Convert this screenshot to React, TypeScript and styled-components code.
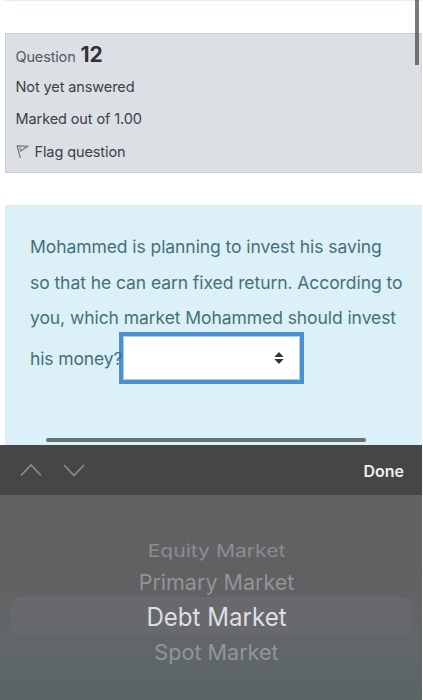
import React from "react";
import styled, { createGlobalStyle } from "styled-components";

const GlobalStyle = createGlobalStyle`
  * {
    box-sizing: border-box;
  }
  body {
    margin: 0;
    background: #fff;
    font-family: Inter, "Liberation Sans", sans-serif;
  }
`;

const Screen = styled.div`
  width: 423px;
  height: 700px;
  display: flex;
  flex-direction: column;
  overflow: hidden;
  padding-right: 1px;
  background: #fff;
`;

const PageView = styled.main`
  position: relative;
  height: 445px;
  flex: none;
  padding-left: 5px;
  overflow: hidden;
`;

const PreviousCard = styled.div`
  height: 1px;
  margin-bottom: 32px;
  background: #e3f0f2;
`;

const InfoCard = styled.section`
  height: 140px;
  padding: 9px 9.5px 0;
  border: 1px solid #cbced6;
  border-right-color: #d6d9e0;
  background: #dcdfe4;
  color: #3c4047;
`;

const InfoLine = styled.div<{ $height: number }>`
  height: ${p => p.$height}px;
  display: flex;
  align-items: center;
  font-size: 14.5px;
  letter-spacing: -0.1px;
  white-space: pre;
`;

const QuestionLabel = styled.h3`
  height: 25px;
  margin: 0;
  display: flex;
  align-items: baseline;
  gap: 5px;
  font-size: 14.5px;
  line-height: 24px;
  font-weight: 400;
  letter-spacing: -0.15px;
  color: #555961;
`;

const QuestionNumber = styled.span`
  font-size: 21px;
  font-weight: 700;
  color: #2f3338;
`;

const FlagIcon = styled.svg`
  width: 13px;
  height: 15px;
  margin-right: 6px;
`;

const QuestionCard = styled.section`
  height: 240px;
  margin-top: 32px;
  padding: 24px 0 0 25px;
  background: #dcf0f8;
  color: #44707b;
`;

const TextLine = styled.div`
  height: 35.7px;
  line-height: 36px;
  font-size: 17.5px;
  letter-spacing: -0.07px;
  white-space: nowrap;
`;

const AnswerLine = styled.div`
  height: 52px;
  margin-top: -4px;
  display: flex;
  align-items: center;
  font-size: 17.5px;
  letter-spacing: -0.12px;
  white-space: nowrap;
`;

const AnswerPrompt = styled.span`
  position: relative;
  z-index: 1;
  width: 89px;
`;

const SelectBox = styled.button`
  width: 185px;
  height: 52px;
  padding: 0 16px 0 0;
  display: flex;
  align-items: center;
  justify-content: flex-end;
  border: 4px solid #4b91d1;
  border-radius: 0;
  box-shadow: inset 0 0 0 1px #a9cdf0;
  background: #fff;
`;

const VerticalScrollbar = styled.div`
  position: absolute;
  top: 0;
  right: 3px;
  width: 4px;
  height: 65px;
  background: rgba(70, 68, 74, 0.72);
`;

const HorizontalScrollbar = styled.div`
  position: absolute;
  left: 46px;
  bottom: 3px;
  width: 320px;
  height: 4px;
  border-radius: 2px;
  background: #63747b;
`;

const Toolbar = styled.div`
  height: 50px;
  flex: none;
  display: flex;
  align-items: center;
  padding: 0 18px 0 20px;
  background: #464646;
`;

const Arrow = styled.svg`
  width: 22px;
  height: 14px;
  margin-right: 21px;
  fill: none;
  stroke: #8b8b8b;
  stroke-width: 1.7;
`;

const DoneButton = styled.button`
  margin-left: auto;
  padding: 2px 0 0;
  border: 0;
  background: none;
  color: #efefef;
  font: 600 16px/20px Inter, sans-serif;
`;

const Picker = styled.div`
  height: 205px;
  padding: 40px 10px 0 11px;
  background: linear-gradient(#616264 0%, #606163 42%, #626466 55%, #616769 73%, #5a6366 100%);
`;

const Option = styled.div<{ $height: number; $color: string; $selected?: boolean }>`
  height: ${p => p.$height}px;
  padding-left: 10px;
  display: flex;
  align-items: center;
  justify-content: center;
  border-radius: 8px;
  background: ${p => (p.$selected ? "#68696c" : "transparent")};
  color: ${p => p.$color};
`;

const OptionText = styled.span<{ $size: number; $squash: number }>`
  padding-top: 2px;
  font-size: ${p => p.$size}px;
  line-height: 1.2;
  transform: scaleY(${p => p.$squash});
`;

const options = [
  { label: "Equity Market", height: 31, color: "#8b8d8f", size: 21.1, squash: 0.82 },
  { label: "Primary Market", height: 31, color: "#929496", size: 21.5, squash: 0.98 },
  { label: "Debt Market", height: 39, color: "#dedfe3", size: 24.1, squash: 1.06, selected: true },
  { label: "Spot Market", height: 32, color: "#8f9799", size: 21.6, squash: 0.98 }
];

const App = () => {
  return (
    <>
      <GlobalStyle />
      <Screen>
        <PageView>
          <PreviousCard />
          <InfoCard>
            <QuestionLabel>
              Question <QuestionNumber>12</QuestionNumber>
            </QuestionLabel>
            <InfoLine $height={36}>Not yet answered</InfoLine>
            <InfoLine $height={28}>Marked out of 1.00</InfoLine>
            <InfoLine $height={38}>
              <FlagIcon viewBox="0 0 13 15" fill="none" stroke="#777a80" strokeWidth="1.2">
                <path d="M1 1.5L4.3 14M1.2 1.8L11.8 2.3L4 7.5M3.6 3.5L5 6.7" />
              </FlagIcon>
              Flag question
            </InfoLine>
          </InfoCard>
          <QuestionCard>
            <TextLine>Mohammed is planning to invest his saving</TextLine>
            <TextLine>so that he can earn fixed return. According to</TextLine>
            <TextLine>you, which market Mohammed should invest</TextLine>
            <AnswerLine>
              <AnswerPrompt>his money?</AnswerPrompt>
              <SelectBox aria-label="Answer">
                <svg width="10" height="12" viewBox="0 0 10 12" fill="#303538">
                  <path d="M0.3 5L5 0L9.7 5ZM0.3 7H9.7L5 12Z" />
                </svg>
              </SelectBox>
            </AnswerLine>
          </QuestionCard>
          <VerticalScrollbar />
          <HorizontalScrollbar />
        </PageView>
        <Toolbar>
          <Arrow viewBox="0 0 22 14">
            <path d="M1 12.5L11 2L21 12.5" />
          </Arrow>
          <Arrow viewBox="0 0 22 14">
            <path d="M1 2L11 12.5L21 2" />
          </Arrow>
          <DoneButton>Done</DoneButton>
        </Toolbar>
        <Picker>
          {options.map(option => (
            <Option
              key={option.label}
              $height={option.height}
              $color={option.color}
              $selected={option.selected}
            >
              <OptionText $size={option.size} $squash={option.squash}>
                {option.label}
              </OptionText>
            </Option>
          ))}
        </Picker>
      </Screen>
    </>
  );
};

export default App;
